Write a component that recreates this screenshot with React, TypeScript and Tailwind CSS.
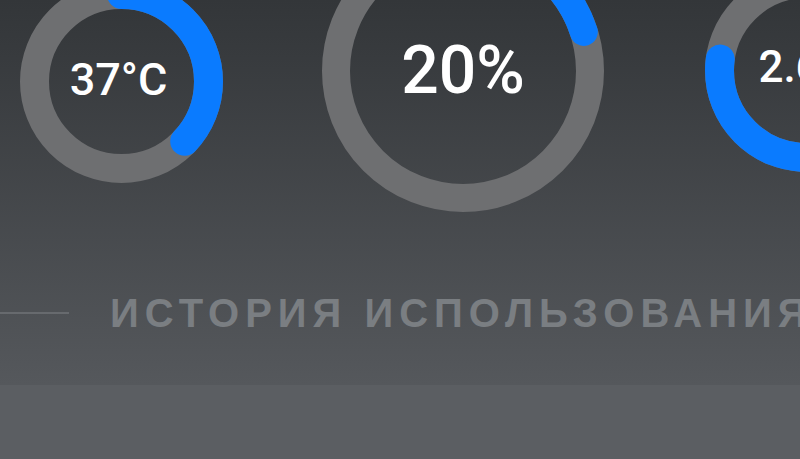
type GaugeProps = {
  size: number
  stroke: number
  value: number
  label: string
  boxClass: string
  textClass: string
}

function Gauge({ size, stroke, value, label, boxClass, textClass }: GaugeProps) {
  const r = size / 2 - stroke / 2
  const c = 2 * Math.PI * r
  return (
    <div className={`relative shrink-0 ${boxClass}`}>
      <svg width={size} height={size} viewBox={`0 0 ${size} ${size}`} className="-rotate-90">
        <circle cx={size / 2} cy={size / 2} r={r} fill="none" stroke="#6e6f71" strokeWidth={stroke} />
        <circle
          cx={size / 2}
          cy={size / 2}
          r={r}
          fill="none"
          stroke="#0a7bff"
          strokeWidth={stroke}
          strokeLinecap="round"
          strokeDasharray={`${c * value} ${c}`}
        />
      </svg>
      <div className="absolute inset-0 flex items-center justify-center">
        <span className={textClass}>{label}</span>
      </div>
    </div>
  )
}

export default function App() {
  return (
    <div className="flex h-[459px] w-[800px] flex-col overflow-hidden font-['Liberation_Sans',Arial,sans-serif]">
      <div className="flex h-[385px] flex-col bg-linear-to-b from-[#333639] to-[#55585c]">
        <div className="-mt-[70px] flex h-[282px] items-start font-['Roboto',sans-serif] font-medium">
          <Gauge
            size={203}
            stroke={29}
            value={0.37}
            label="37°C"
            boxClass="ml-[20px] mt-[50px] h-[203px] w-[203px]"
            textClass="-translate-x-[3px] -translate-y-[2px] text-[45px] leading-none text-white"
          />
          <Gauge
            size={282}
            stroke={28}
            value={0.2}
            label="20%"
            boxClass="ml-[99px] h-[282px] w-[282px]"
            textClass="text-[66px] leading-none text-white"
          />
          <Gauge
            size={203}
            stroke={29}
            value={0.77}
            label="2.6G"
            boxClass="ml-[101px] mt-[39px] h-[203px] w-[203px]"
            textClass="-translate-x-[2px] -translate-y-[4px] text-[44px] leading-none text-white"
          />
        </div>

        <div className="mt-[81px] flex h-[40px] items-center">
          <div className="h-[2px] w-[69px] shrink-0 bg-[#676a6e]" />
          <p className="ml-[41px] whitespace-nowrap text-[40px] font-bold leading-none tracking-[6px] text-[#7a7e82]">
            ИСТОРИЯ ИСПОЛЬЗОВАНИЯ
          </p>
        </div>
      </div>

      <div className="flex-1 bg-[#5b5e62]" />
    </div>
  )
}
